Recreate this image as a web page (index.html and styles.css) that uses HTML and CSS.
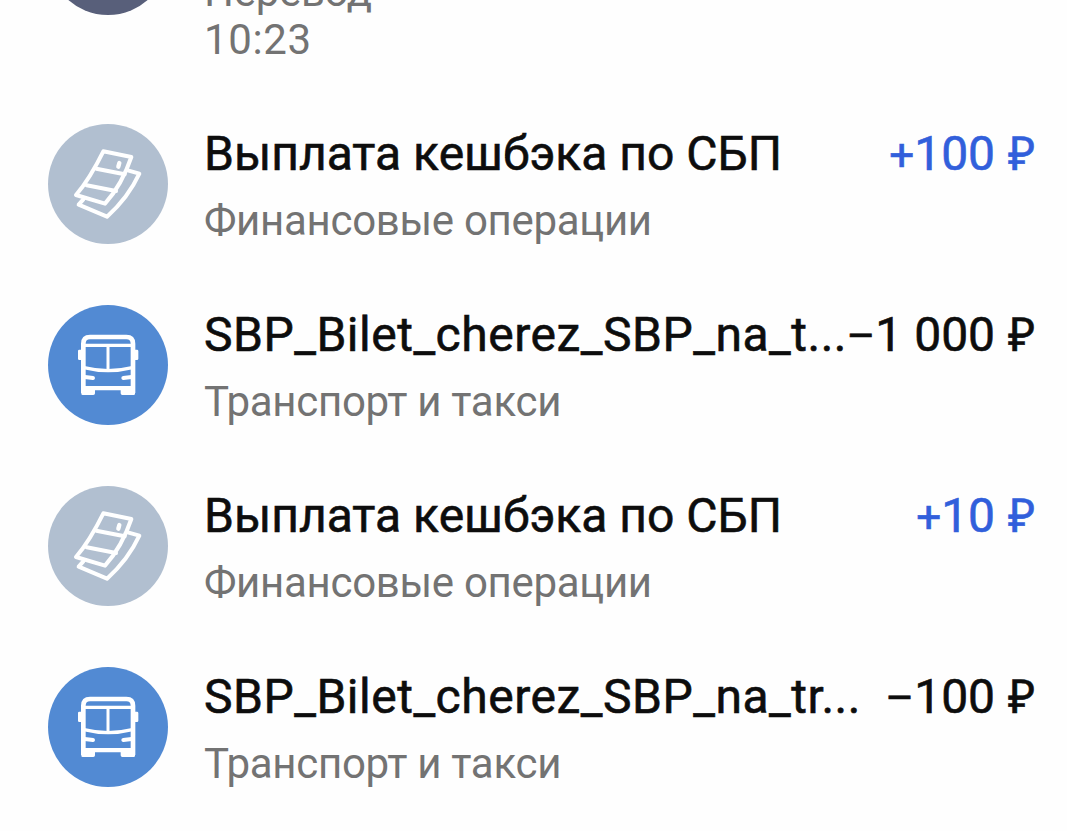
FILE: index.html
```html
<!DOCTYPE html>
<html lang="ru">
<head>
  <meta charset="UTF-8">
  <meta name="viewport" content="width=device-width, initial-scale=1.0">
  <title>История операций</title>
  <link rel="stylesheet" href="styles.css">
</head>
<body>

  <!-- Icons -->
  <svg class="sprite" width="0" height="0">
    <symbol id="icon-cash" viewBox="0 0 360 360">
      <g fill="none" stroke="#fff" stroke-width="12" stroke-linejoin="round" stroke-linecap="round">
        <path d="M166 82L250 99Q222 182 171 239L84 213Q125 165 166 82Z"/>
        <path d="M145 134L230 151M116 184L204 201"/>
        <path d="M242 140L274 149Q240 222 177 278L92 242L106 226"/>
        <path d="M214 117L211 128" stroke-width="13"/>
      </g>
    </symbol>
    <symbol id="icon-bus" viewBox="0 0 360 360">
      <g fill="none" stroke="#fff">
        <path d="M106 264V116Q106 96 126 96H235Q255 96 255 116V264" stroke-width="14"/>
        <path d="M106 121H255" stroke-width="10"/>
        <path d="M180 121V196" stroke-width="9"/>
        <path d="M108 188Q180 206 253 188" stroke-width="10"/>
        <path d="M110 216L135 219M251 216L226 219" stroke-width="12" stroke-linecap="round"/>
      </g>
      <path fill="#fff" d="M100 243H261V266Q261 270 257 270H223Q218 270 218 265V256H141V265Q141 270 136 270H104Q100 270 100 266ZM102 134V165H94Q90 165 90 161V138Q90 134 94 134ZM259 134V165H267Q271 165 271 161V138Q271 134 267 134Z"/>
    </symbol>
  </svg>

  <!-- Operations -->
  <div class="operations">
    <div class="operation operation-cut">
      <div class="icon transfer"></div>
      <div class="info">
        <div class="category">Перевод</div>
        <div class="category time">10:23</div>
      </div>
    </div>

    <div class="operation">
      <div class="icon finance"><svg><use href="#icon-cash"/></svg></div>
      <div class="info">
        <div class="top">
          <span class="name">Выплата кешбэка по СБП</span>
          <span class="amount income"><span class="sign">+</span>100 <span class="currency">₽</span></span>
        </div>
        <div class="category">Финансовые операции</div>
      </div>
    </div>

    <div class="operation">
      <div class="icon transport"><svg><use href="#icon-bus"/></svg></div>
      <div class="info">
        <div class="top">
          <span class="name latin">SBP_Bilet_cherez_SBP_na_t...</span>
          <span class="amount"><span class="sign">–</span>1 000 <span class="currency">₽</span></span>
        </div>
        <div class="category">Транспорт и такси</div>
      </div>
    </div>

    <div class="operation">
      <div class="icon finance"><svg><use href="#icon-cash"/></svg></div>
      <div class="info">
        <div class="top">
          <span class="name">Выплата кешбэка по СБП</span>
          <span class="amount income"><span class="sign">+</span>10 <span class="currency">₽</span></span>
        </div>
        <div class="category">Финансовые операции</div>
      </div>
    </div>

    <div class="operation">
      <div class="icon transport"><svg><use href="#icon-bus"/></svg></div>
      <div class="info">
        <div class="top">
          <span class="name latin">SBP_Bilet_cherez_SBP_na_tr...</span>
          <span class="amount"><span class="sign">–</span>100 <span class="currency">₽</span></span>
        </div>
        <div class="category">Транспорт и такси</div>
      </div>
    </div>
  </div>

</body>
</html>
```
FILE: styles.css
```css
body {
  margin: 0;
  height: 831px;
  overflow: hidden;
  background-color: #fefefe;
  font-family: Roboto, sans-serif;
}

.sprite {
  display: block;
}

.operations {
  display: flex;
  flex-direction: column;
  gap: 61px;
  padding: 0 33px 0 48px;
}

.operation {
  display: flex;
  gap: 36px;
  height: 120px;
}

.operation-cut {
  height: 64px;
  margin-bottom: -1px;
  overflow: hidden;
  align-items: flex-end;
}

.icon {
  flex: none;
  width: 120px;
  height: 120px;
  border-radius: 50%;
}

.icon svg {
  display: block;
  width: 120px;
  height: 120px;
}

.transfer {
  align-self: flex-start;
  margin-top: -105px;
  background-color: #585f7a;
}

.finance {
  background-color: #b1bfd0;
}

.transport {
  background-color: #528ad3;
}

.info {
  flex: 1;
  min-width: 0;
}

.top {
  display: flex;
  justify-content: space-between;
  height: 56px;
  margin: 2px 0 15px;
  line-height: 56px;
  font-size: 48px;
  color: #0d0d0d;
  white-space: nowrap;
  -webkit-text-stroke: 0.6px;
}

.name {
  min-width: 0;
}

.latin {
  letter-spacing: 0.52px;
}

.amount {
  flex: none;
}

.sign {
  font-size: 44px;
}

.currency {
  margin-left: 1px;
  font-family: "Liberation Sans", Arial, sans-serif;
  font-size: 47px;
  letter-spacing: -1px;
}

.income {
  color: #315fdb;
}

.category {
  font-size: 42px;
  line-height: 48px;
  letter-spacing: -0.3px;
  color: #737373;
}

.time {
  letter-spacing: 0.6px;
}
```
